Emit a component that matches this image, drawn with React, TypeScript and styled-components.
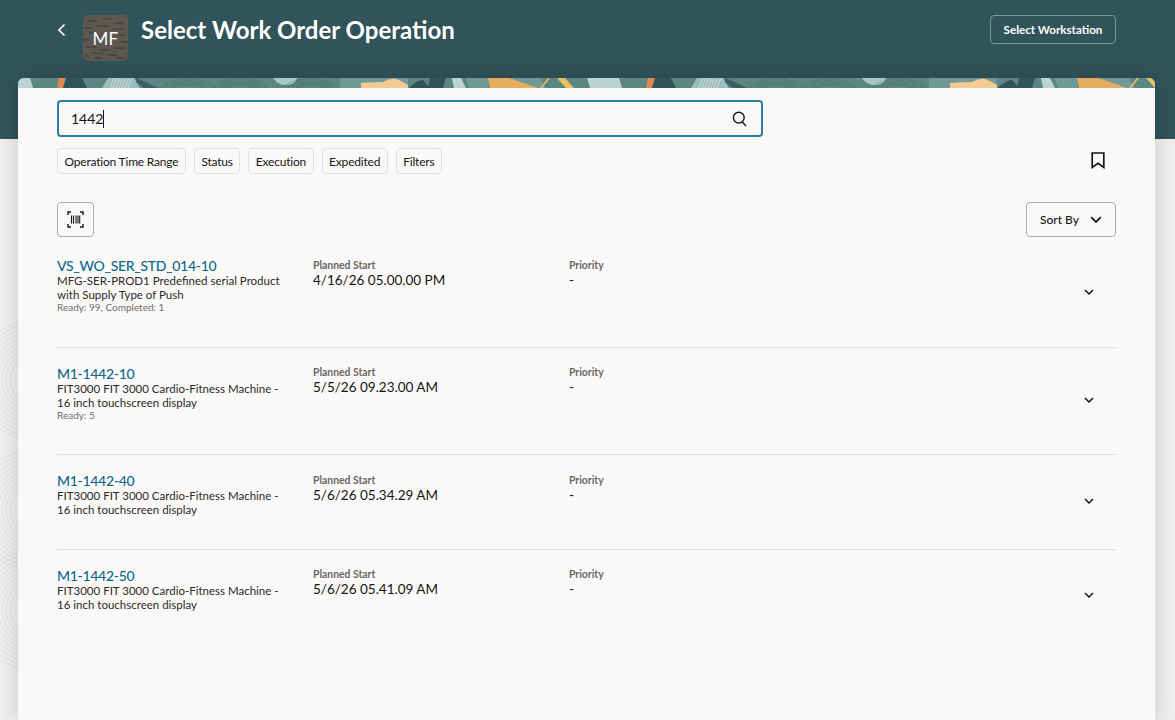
import React from "react";
import styled, { createGlobalStyle } from "styled-components";

const FONT = `Lato, "Noto Sans", "Liberation Sans", sans-serif`;

const GlobalStyle = createGlobalStyle`
  html, body {
    margin: 0;
    padding: 0;
    height: 100%;
    overflow: hidden;
    font-family: ${FONT};
    color: #161513;
  }
`;

const Page = styled.div`
  position: relative;
  width: 1175px;
  height: 720px;
  overflow: hidden;
  background: linear-gradient(#31535a 0 139px, #efeeec 139px);
`;

const SideRings = styled.svg`
  position: absolute;
  left: 0;
  top: 310px;
`;

const TopBar = styled.header`
  position: relative;
  display: flex;
  align-items: flex-start;
  height: 78px;
  padding: 15px 59px 0 56px;
  box-sizing: border-box;
  color: #fff;
`;

const BackButton = styled.button`
  display: flex;
  align-items: center;
  justify-content: center;
  width: 11px;
  height: 30px;
  margin-right: 16px;
  padding: 0;
  border: 0;
  background: none;
  color: #fff;
`;

const Avatar = styled.div`
  position: relative;
  display: flex;
  align-items: center;
  justify-content: center;
  width: 45px;
  height: 46px;
  padding-top: 1px;
  box-sizing: border-box;
  overflow: hidden;
  border-radius: 5px;
  background: #5e5751;
  font-size: 17px;
  letter-spacing: 0.3px;
`;

const AvatarBark = styled.svg`
  position: absolute;
  inset: 0;
`;

const AvatarText = styled.span`
  position: relative;
`;

const Title = styled.h1`
  flex: 1;
  margin: 0 0 0 13px;
  font-size: 24px;
  font-weight: 700;
  line-height: 29px;
`;

const WorkstationButton = styled.button`
  width: 126px;
  height: 29px;
  padding: 0;
  border: 1px solid #7d979b;
  border-radius: 4px;
  background: none;
  color: #fff;
  font: 700 11.6px ${FONT};
`;

const Card = styled.main`
  position: relative;
  display: flex;
  flex-direction: column;
  width: 1137px;
  height: 642px;
  margin-left: 18px;
  overflow: hidden;
  border-radius: 6px 6px 0 0;
  background: #fbf9f8;
  box-shadow: 0 0 20px rgba(0, 0, 0, 0.16);
`;

const Banner = styled.svg`
  display: block;
  flex: none;
`;

const CardBody = styled.div`
  display: flex;
  flex-direction: column;
  padding: 12px 39px 0;
`;

const SearchBox = styled.div`
  display: flex;
  align-items: center;
  justify-content: space-between;
  width: 706px;
  height: 37px;
  padding: 0 13px 0 12px;
  box-sizing: border-box;
  border: 2px solid #2b7f9e;
  border-radius: 4px;
  font-size: 14px;
`;

const SearchValue = styled.span`
  border-right: 1px solid #161513;
  line-height: 18px;
`;

const FilterRow = styled.div`
  display: flex;
  align-items: center;
  margin-top: 11px;
`;

const Chip = styled.button`
  height: 26px;
  margin-right: 8px;
  padding: 0 6.5px;
  border: 1px solid #e2dfdc;
  border-radius: 4px;
  background: #fbf9f8;
  color: #161513;
  font: 400 12px ${FONT};
  letter-spacing: -0.2px;
`;

const BookmarkButton = styled.div`
  display: flex;
  margin-left: auto;
  margin-right: 11px;
  padding-bottom: 2px;
`;

const ToolRow = styled.div`
  display: flex;
  justify-content: space-between;
  margin-top: 28px;
`;

const ScanButton = styled.button`
  display: flex;
  align-items: center;
  justify-content: center;
  width: 37px;
  height: 35px;
  padding: 0;
  border: 1px solid #aeaba7;
  border-radius: 4px;
  background: none;
  color: #161513;
`;

const SortButton = styled.button`
  display: flex;
  align-items: center;
  justify-content: space-between;
  width: 90px;
  height: 35px;
  padding: 0 13px;
  box-sizing: border-box;
  border: 1px solid #aeaba7;
  border-radius: 4px;
  background: none;
  color: #161513;
  font: 500 12px ${FONT};
`;

const List = styled.div`
  display: flex;
  flex-direction: column;
  margin-top: 3px;
`;

const Row = styled.article`
  display: grid;
  grid-template-columns: 256px 256px 1fr 20px;
  align-items: start;
  padding: 17px 17px 31.6px 0;
  border-bottom: 1px solid #e3e1de;

  &:last-child {
    border-bottom: 0;
  }
`;

const Main = styled.div`
  display: flex;
  flex-direction: column;
  width: 226px;
`;

const RowLink = styled.a`
  color: #0b6a8b;
  font-size: 14px;
  font-weight: 500;
  line-height: 17px;
  letter-spacing: -0.3px;
`;

const Description = styled.div`
  font-size: 11.5px;
  line-height: 14px;
  color: #2a2927;
`;

const Meta = styled.div`
  margin-top: -1px;
  padding-bottom: 1px;
  font-size: 10px;
  line-height: 13px;
  color: #6f6c69;
`;

const Field = styled.div`
  display: flex;
  flex-direction: column;
  padding-top: 1.5px;
`;

const FieldLabel = styled.span`
  color: #6a6764;
  font-size: 10.4px;
  font-weight: 700;
  line-height: 13px;
`;

const FieldValue = styled.span`
  font-size: 13.5px;
  line-height: 17px;
`;

const Expand = styled.div`
  display: flex;
  justify-content: center;
  align-self: center;
  margin-top: 12px;
  color: #161513;
`;

const Chevron = ({ size = 10 }: { size?: number }) => (
  <svg width={size} height={size * 0.6} viewBox="0 0 10 6" fill="none">
    <path d="M1 1l4 4 4-4" stroke="currentColor" strokeWidth="1.5" />
  </svg>
);

const bark = [
  [4, 6, 10], [20, 4, 8], [32, 8, 9], [2, 13, 7], [14, 11, 12], [30, 14, 10],
  [6, 18, 6], [36, 20, 7], [1, 25, 5], [38, 27, 6], [3, 32, 10], [18, 35, 8],
  [31, 33, 11], [8, 38, 12], [25, 40, 9], [12, 43, 7], [33, 43, 8], [2, 41, 5],
];

const tile = (x: number) => (
  <g key={x} transform={`translate(${x} 0)`}>
    <path d="M-20 0h32l3 10h-32z" fill="#b9d4d7" />
    <path d="M41 0h7l-3 10h-6z" fill="#e2874f" />
    <path d="M48 0h16l5 10h-24z" fill="#31535a" />
    <path d="M90 0h26l6 10h-38z" fill="#9dbdbd" />
    <g stroke="#e6efee" strokeWidth="0.6">
      {[92, 95, 98, 101, 104, 107, 110].map((h) => (
        <path key={h} d={`M${h} 10l4-10`} />
      ))}
    </g>
    <path d="M118 0q10 4 22 10h-14l-8-6z" fill="#3d5f63" />
    <path d="M255 0h24q-2 8-14 7-7-2-10-7z" fill="#a8c8c8" />
    <path d="M322 0h68v10h-68z" fill="#6f9a97" />
    <path d="M343 5q14-1 22-1 7-4 13-3 8 3 12 6v3h-47z" fill="#f2ca92" />
    <path d="M391 10q8-8 14-8l7 8z" fill="#31535a" />
    <path d="M412 0h16l-3 10h-15z" fill="#31535a" />
    <path d="M434 0h9l5 10h-12z" fill="#b9d4d7" />
    <path d="M448 0h22l1 10h-20z" fill="#6f9a97" />
    <path d="M470 0h22l29 10h-49z" fill="#e5ad5d" />
    <path d="M492 0h30l6 10h-7z" fill="#6f9a97" />
    <path d="M522 10l8-10h2l-8 10z" fill="#efc05f" />
    <path d="M539 0h8l9 10h-8z" fill="#efc05f" />
    {[170, 222, 292].map((c) => (
      <g key={c} fill="none" stroke="#31535a" strokeWidth="0.5" opacity="0.65">
        <ellipse cx={c} cy="13" rx="28" ry="12" />
        <ellipse cx={c} cy="13" rx="24" ry="10" />
        <ellipse cx={c} cy="13" rx="20" ry="8" />
        <ellipse cx={c} cy="13" rx="16" ry="6" />
      </g>
    ))}
  </g>
);

const rows = [
  {
    id: "VS_WO_SER_STD_014-10",
    description: "MFG-SER-PROD1 Predefined serial Product with Supply Type of Push",
    meta: "Ready: 99, Completed: 1",
    start: "4/16/26 05.00.00 PM",
  },
  {
    id: "M1-1442-10",
    description: "FIT3000 FIT 3000 Cardio-Fitness Machine - 16 inch touchscreen display",
    meta: "Ready: 5",
    start: "5/5/26 09.23.00 AM",
  },
  {
    id: "M1-1442-40",
    description: "FIT3000 FIT 3000 Cardio-Fitness Machine - 16 inch touchscreen display",
    start: "5/6/26 05.34.29 AM",
  },
  {
    id: "M1-1442-50",
    description: "FIT3000 FIT 3000 Cardio-Fitness Machine - 16 inch touchscreen display",
    start: "5/6/26 05.41.09 AM",
  },
];

const filters = ["Operation Time Range", "Status", "Execution", "Expedited", "Filters"];

export default function App() {
  return (
    <Page>
      <GlobalStyle />
      <SideRings width="18" height="370" viewBox="0 0 18 370" fill="none" stroke="#e2e1df" strokeWidth="1">
        {[70, 200, 300].map((cy) =>
          [24, 28, 32, 36, 40, 44, 48, 52, 56, 60].map((r) => <circle key={`${cy}-${r}`} cx="34" cy={cy} r={r} />)
        )}
      </SideRings>
      <TopBar>
        <BackButton aria-label="Back">
          <svg width="9" height="14" viewBox="0 0 9 14" fill="none">
            <path d="M7.5 1.5L2 7l5.5 5.5" stroke="currentColor" strokeWidth="1.7" />
          </svg>
        </BackButton>
        <Avatar>
          <AvatarBark width="45" height="46" viewBox="0 0 45 46" stroke="#2f2b28" strokeWidth="0.7">
            {bark.map(([x, y, w]) => (
              <path key={`${x}-${y}`} d={`M${x} ${y}h${w}`} />
            ))}
          </AvatarBark>
          <AvatarText>MF</AvatarText>
        </Avatar>
        <Title>Select Work Order Operation</Title>
        <WorkstationButton>Select Workstation</WorkstationButton>
      </TopBar>
      <Card>
        <Banner width="1137" height="10" viewBox="0 0 1137 10">
          <rect width="1137" height="10" fill="#5c8681" />
          {tile(0)}
          {tile(589)}
        </Banner>
        <CardBody>
          <SearchBox>
            <SearchValue>1442</SearchValue>
            <svg width="16" height="16" viewBox="0 0 16 16" fill="none" stroke="#161513" strokeWidth="1.4">
              <circle cx="6.8" cy="6.6" r="5.4" />
              <path d="M10.2 11l3.8 4" />
            </svg>
          </SearchBox>
          <FilterRow>
            {filters.map((f) => (
              <Chip key={f}>{f}</Chip>
            ))}
            <BookmarkButton>
              <svg width="14" height="17" viewBox="0 0 14 17" fill="none">
                <path d="M1.2 1h11.6v14.4L7 11.2l-5.8 4.2z" stroke="#161513" strokeWidth="1.7" />
              </svg>
            </BookmarkButton>
          </FilterRow>
          <ToolRow>
            <ScanButton aria-label="Scan barcode">
              <svg width="17" height="17" viewBox="0 0 17 17" fill="none" stroke="currentColor">
                <path d="M1 4V1h3M13 1h3v3M1 13v3h3M13 16h3v-3" strokeWidth="1.4" />
                <path d="M4.5 4.5v8M6.5 4.5v8M9 4.5v8M11 4.5v8M12.7 4.5v8" strokeWidth="1.1" />
              </svg>
            </ScanButton>
            <SortButton>
              Sort By
              <Chevron size={12} />
            </SortButton>
          </ToolRow>
          <List>
            {rows.map((r) => (
              <Row key={r.id}>
                <Main>
                  <RowLink>{r.id}</RowLink>
                  <Description>{r.description}</Description>
                  {r.meta && <Meta>{r.meta}</Meta>}
                </Main>
                <Field>
                  <FieldLabel>Planned Start</FieldLabel>
                  <FieldValue>{r.start}</FieldValue>
                </Field>
                <Field>
                  <FieldLabel>Priority</FieldLabel>
                  <FieldValue>-</FieldValue>
                </Field>
                <Expand>
                  <Chevron size={10} />
                </Expand>
              </Row>
            ))}
          </List>
        </CardBody>
      </Card>
    </Page>
  );
}
